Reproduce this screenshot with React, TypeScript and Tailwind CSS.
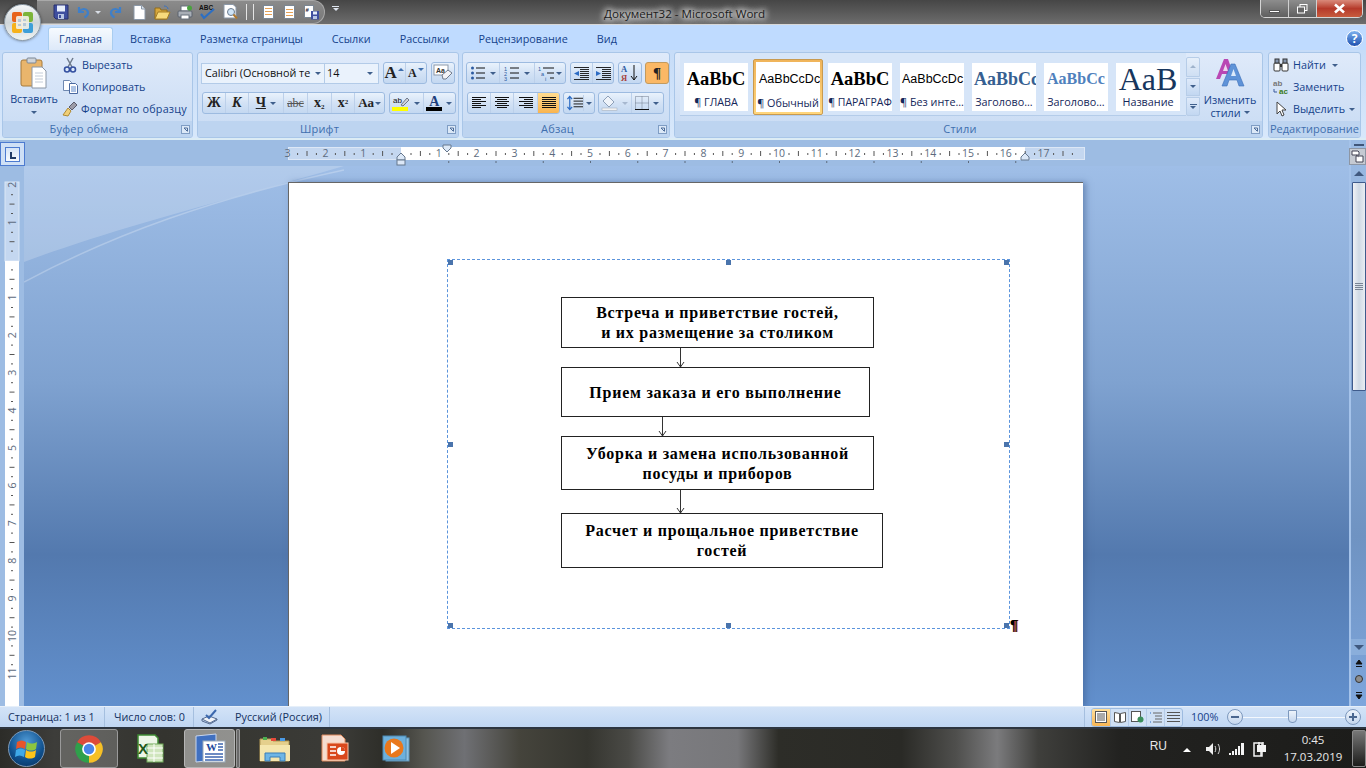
import React from 'react';

const Drop = ({ className = '' }: { className?: string }) => (
  <span className={`inline-block w-0 h-0 shrink-0 border-x-[3px] border-x-transparent border-t-[3px] border-t-[#3f5f8c] ${className}`} />
);

const Launcher = () => (
  <svg width="9" height="9" viewBox="0 0 9 9" className="mr-[2px]">
    <rect x="0.5" y="0.5" width="8" height="8" fill="#dbe8f7" stroke="#7f9dc4" />
    <path d="M3 3h3.5v3.5M3 3l3 3" stroke="#4c6c99" fill="none" />
  </svg>
);

const Group = ({ title, w, launcher = true, children }: { title: string; w: string; launcher?: boolean; children: React.ReactNode }) => (
  <div className={`${w} h-[86px] shrink-0 flex flex-col rounded-[3px] border border-[#a9c6e8] bg-gradient-to-b from-[#dfeafa] to-[#c8dbf3] overflow-hidden`}>
    <div className="h-[68px] relative">{children}</div>
    <div className="h-[16px] bg-[#bdd4f0] flex items-center justify-center relative text-[#3f6fae] text-[11px]">
      <span className={`flex-1 text-center ${launcher ? 'pr-[6px] tracking-[0.2px]' : ''}`}>{title}</span>
      {launcher && <Launcher />}
    </div>
  </div>
);

const Cluster = ({ className = '', children }: { className?: string; children: React.ReactNode }) => (
  <div className={`h-[22px] flex items-stretch rounded-[3px] border border-[#9dbbe0] bg-gradient-to-b from-[#e9f2fc] via-[#d3e2f5] to-[#c4d8f1] divide-x divide-[#bcd0ea] overflow-hidden ${className}`}>
    {children}
  </div>
);

const Cell = ({ w, active = false, children }: { w: string; active?: boolean; children: React.ReactNode }) => (
  <div className={`${w} flex items-center justify-center gap-[4px] ${active ? 'bg-gradient-to-b from-[#ffdc8f] to-[#f9b44f]' : ''}`}>{children}</div>
);

const LineIcon = ({ rows }: { rows: [number, number][] }) => (
  <svg width="16" height="14" viewBox="0 0 16 14">
    {rows.map(([x, w], i) => (
      <rect key={i} x={x} y={1 + i * 2} width={w} height="1" fill="#111" />
    ))}
  </svg>
);

const StyleTile = ({ sample, sampleClass, label, labelClass = '' }: { sample: string; sampleClass: string; label: string; labelClass?: string }) => (
  <div className="w-[64px] h-[48px] bg-white flex flex-col overflow-hidden shrink-0">
    <div className={`h-[32px] flex items-center justify-center whitespace-nowrap overflow-hidden ${sampleClass}`}>{sample}</div>
    <div className={`h-[16px] leading-[14px] text-center whitespace-nowrap text-[#15275a] ${labelClass}`}>{label}</div>
  </div>
);

const OfficeButton = () => (
  <div className="absolute left-[4px] top-[4px] w-[37px] h-[37px] rounded-full bg-gradient-to-b from-[#f5f7f8] via-[#cfd6da] to-[#eef3f3] border border-[#8c9aa6] flex items-center justify-center shadow-[0_0_3px_#00000080]">
    <svg width="25" height="25" viewBox="0 0 25 25">
      <rect x="2" y="2" width="10" height="10" rx="2" fill="#e8641c" />
      <rect x="13" y="2" width="10" height="10" rx="2" fill="#7cb53a" />
      <rect x="2" y="13" width="10" height="10" rx="2" fill="#f6b21b" />
      <rect x="13" y="13" width="10" height="10" rx="2" fill="#3d9fd8" />
      <rect x="6" y="6" width="13" height="13" rx="1.5" fill="#f3f1e8" opacity="0.9" />
      <path d="M8 9h3v3H8zM13 9h3v2h-3zM8 14h3v2H8zM13 13h3v3h-3z" fill="#b6c9d8" />
    </svg>
  </div>
);

const QatIcons = () => (
  <>
    <svg width="16" height="16" viewBox="0 0 16 16" className="ml-[16px] shrink-0">
      <path d="M1 1h14v14H3l-2-2z" fill="#3f4f9f" stroke="#28306f" />
      <rect x="4" y="1.5" width="8" height="6" fill="#e7eefb" />
      <rect x="5" y="10" width="6" height="5" fill="#b8c6e4" />
      <rect x="6" y="11" width="2" height="3" fill="#3f4f9f" />
    </svg>
    <svg width="14" height="14" viewBox="0 0 14 14" className="ml-[7px] shrink-0">
      <path d="M3 2v5h5M3.5 6.500C5 3.500 10 3 11.500 6s-.5 5-3 6.500" fill="none" stroke="#3f7fc8" strokeWidth="2.200" />
    </svg>
    <Drop className="ml-[5px] !border-t-[#d8dde5]" />
    <svg width="14" height="14" viewBox="0 0 14 14" className="ml-[8px] shrink-0">
      <path d="M11 2v5H6M10.500 6.500C9 3.500 4 3 2.500 6s.5 5 3 6.500" fill="none" stroke="#3f7fc8" strokeWidth="2.200" />
    </svg>
    <svg width="13" height="15" viewBox="0 0 13 15" className="ml-[10px] shrink-0">
      <path d="M1 .5h7.500L12 4v10.500H1z" fill="#fff" stroke="#8b98a8" />
      <path d="M8.500.5V4H12" fill="#dfe6ee" stroke="#8b98a8" />
    </svg>
    <svg width="17" height="15" viewBox="0 0 17 15" className="ml-[8px] shrink-0">
      <path d="M1 3h5l1 2h6v9H1z" fill="#d8a83c" stroke="#8f6a1c" />
      <path d="M1 14l3-7h12l-3 7z" fill="#f8da7c" stroke="#a57d24" />
      <path d="M10 1c2 0 4 1 4 3" fill="none" stroke="#3b72c0" />
    </svg>
    <svg width="16" height="15" viewBox="0 0 16 15" className="ml-[6px] shrink-0">
      <rect x="4" y="1" width="8" height="5" fill="#fff" stroke="#66707c" />
      <rect x="1" y="6" width="14" height="6" rx="1" fill="#a8aeb6" stroke="#5a626e" />
      <rect x="4" y="10" width="8" height="4" fill="#fff" stroke="#66707c" />
      <circle cx="12.500" cy="3" r="2.500" fill="#4aa23e" />
    </svg>
    <svg width="17" height="16" viewBox="0 0 17 16" className="ml-[6px] shrink-0">
      <text x="0" y="6" fontSize="6.500" fontWeight="700" fill="#111" fontFamily="Liberation Sans">ABC</text>
      <path d="M2 10l3 4 10-9" fill="none" stroke="#2c6fc4" strokeWidth="2.200" />
    </svg>
    <svg width="15" height="16" viewBox="0 0 15 16" className="ml-[7px] shrink-0">
      <path d="M1 .5h9L13 3v11H1z" fill="#fff" stroke="#8b98a8" />
      <circle cx="8" cy="8" r="3.500" fill="#cfe4f6" stroke="#6a7a8c" />
      <path d="M10.500 10.500l3.500 4" stroke="#b07a30" strokeWidth="2" />
    </svg>
    <div className="ml-[8px] w-[1px] h-[16px] bg-[#e4e4e4]" />
    <div className="ml-[6px] w-[1px] h-[16px] bg-[#e4e4e4]" />
    <svg width="11" height="14" viewBox="0 0 11 14" className="ml-[9px] shrink-0">
      <rect x=".5" y=".5" width="10" height="13" fill="#fff" stroke="#7b8794" />
      <path d="M2 3.500h7M2 6.500h7M2 9.500h7" stroke="#e08a2c" strokeWidth=".8" />
    </svg>
    <svg width="11" height="14" viewBox="0 0 11 14" className="ml-[10px] shrink-0">
      <rect x=".5" y=".5" width="10" height="13" fill="#fff" stroke="#7b8794" />
      <path d="M2 4.500h7M2 7.500h7M2 10.500h7" stroke="#e08a2c" strokeWidth=".8" />
    </svg>
    <svg width="16" height="15" viewBox="0 0 16 15" className="ml-[9px] shrink-0">
      <rect x=".5" y=".5" width="9" height="12" fill="#fff" stroke="#7b8794" />
      <text x="1.500" y="7" fontSize="6" fontWeight="700" fill="#223" fontFamily="Liberation Sans">#</text>
      <path d="M7 6h8v8.500H7z" fill="#3f4f9f" />
      <rect x="9" y="6.500" width="4" height="3" fill="#e7eefb" />
      <rect x="9" y="11" width="4" height="3" fill="#b8c6e4" />
    </svg>
  </>
);

const TitleBar = () => (
  <div className="h-[25px] shrink-0 flex items-start bg-gradient-to-b from-[#464646] to-[#6d6d6d] border-b border-b-[#d8d8d8]">
    <div className="ml-[37px] w-[288px] h-[24px] flex items-center rounded-r-full bg-gradient-to-b from-[#8b8b8b] to-[#777] border border-[#a9a9a9] border-l-0">
      <QatIcons />
    </div>
    <div className="ml-[7px] mt-[6px] flex flex-col items-center gap-[1px]">
      <div className="w-[7px] h-[1px] bg-[#dfe6f0]" />
      <Drop className="!border-t-[#dfe6f0]" />
    </div>
    <div className="ml-[265px] mt-[6px] text-[11.6px] leading-[16px] text-[#1c1c1c] [text-shadow:0_0_6px_#fff,0_0_6px_#fff,0_0_10px_#fff]">Документ32 - Microsoft Word</div>
    <div className="ml-auto mr-[3px] h-[18px] w-[103px] flex rounded-b-[5px] border border-t-0 border-[#d5d5d5] overflow-hidden">
      <div className="w-[28px] flex items-end justify-center pb-[4px] bg-gradient-to-b from-[#8d8d8d] to-[#5f5f5f] border-r border-[#d0d0d0]">
        <div className="w-[11px] h-[3px] bg-white border border-[#555]" />
      </div>
      <div className="w-[28px] flex items-center justify-center bg-gradient-to-b from-[#8d8d8d] to-[#5f5f5f] border-r border-[#d0d0d0]">
        <svg width="11" height="10" viewBox="0 0 11 10"><rect x="3" y=".5" width="7" height="6" fill="none" stroke="#fff" /><rect x=".5" y="3" width="7" height="6" fill="#666" stroke="#fff" /></svg>
      </div>
      <div className="flex-1 flex items-center justify-center bg-gradient-to-b from-[#d9897a] via-[#b5392a] to-[#c75b3d]">
        <svg width="13" height="11" viewBox="0 0 13 11"><path d="M2 1.500l9 8M11 1.500l-9 8" stroke="#fff" strokeWidth="2.600" /></svg>
      </div>
    </div>
  </div>
);

const TabRow = () => (
  <div className="h-[25px] shrink-0 flex items-end pl-[48px] bg-[#bfdbff] text-[#15428b] relative">
    <div className="w-[65px] h-[23px] flex items-center justify-center rounded-t-[3px] border border-b-0 border-[#a9cdf0] bg-gradient-to-b from-[#f6fafe] to-[#dde9f9]">Главная</div>
    <div className="h-[23px] flex items-center gap-[29px] ml-[17px] text-[10.8px]">
      <span>Вставка</span>
      <span>Разметка страницы</span>
      <span>Ссылки</span>
      <span>Рассылки</span>
      <span>Рецензирование</span>
      <span>Вид</span>
    </div>
    <div className="ml-auto mr-[3px] mb-[3px] w-[17px] h-[17px] rounded-full bg-gradient-to-b from-[#7fb2ee] to-[#1d4fb0] border border-white text-white text-[12px] leading-[15px] font-bold text-center">?</div>
  </div>
);

const ClipboardGroup = () => (
  <Group title="Буфер обмена" w="w-[191px]">
    <div className="h-full flex text-[#15428b]">
      <div className="w-[56px] ml-[3px] flex flex-col items-center">
        <svg width="28" height="32" viewBox="0 0 28 32" className="mt-[4px]">
          <rect x="1" y="3" width="21" height="26" rx="2" fill="#e9b56c" stroke="#a67a3c" />
          <rect x="7" y="1" width="9" height="5" rx="1" fill="#cfd4da" stroke="#7d8794" />
          <path d="M12 10h10l4 4v17H12z" fill="#fff" stroke="#8a96a6" />
          <path d="M15 16h8M15 19h8M15 22h8M15 25h8" stroke="#c3ccd8" />
        </svg>
        <span className="mt-[3px] leading-[14px]">Вставить</span>
        <Drop className="mt-[5px]" />
      </div>
      <div className="ml-[1px] pt-[1px] flex flex-col">
        <div className="h-[22px] flex items-center gap-[5px]">
          <svg width="14" height="16" viewBox="0 0 14 16"><path d="M4 1l5 9M10 1L5 10" stroke="#6f7b8c" strokeWidth="1.500" /><circle cx="4" cy="12.500" r="2.500" fill="none" stroke="#3450a0" strokeWidth="1.600" /><circle cx="10" cy="12.500" r="2.500" fill="none" stroke="#3450a0" strokeWidth="1.600" /></svg>
          <span>Вырезать</span>
        </div>
        <div className="h-[22px] flex items-center gap-[4px]">
          <svg width="15" height="14" viewBox="0 0 15 14"><path d="M.5.5h6l2 2v8h-8z" fill="#fff" stroke="#6f88b0" /><path d="M6.500 3.500h6l2 2v8h-8z" fill="#fff" stroke="#4a69a0" /><path d="M8 7h5M8 9h5M8 11h5" stroke="#5a86c8" /></svg>
          <span>Копировать</span>
        </div>
        <div className="h-[22px] flex items-center gap-[3px] -ml-[1px]">
          <svg width="16" height="16" viewBox="0 0 16 16"><path d="M1 14l5-7 3 3-3 5z" fill="#f0cf78" stroke="#b08a34" /><path d="M7 6l5-5 3 3-5 5z" fill="#9c9ca8" stroke="#5c5c6c" /></svg>
          <span className="tracking-[0.2px]">Формат по образцу</span>
        </div>
      </div>
    </div>
  </Group>
);

const FontGroup = () => (
  <Group title="Шрифт" w="w-[262px]">
    <div className="pl-[3px] pt-[9px] flex flex-col gap-[8px] text-[#15428b]">
      <div className="flex items-center">
        <div className="w-[124px] h-[21px] flex items-center justify-between px-[3px] bg-[#eaf2fc] border border-[#b3cbe8] text-[#111] overflow-hidden whitespace-nowrap">
          <span className="w-[106px] overflow-hidden">Calibri (Основной те</span>
          <Drop />
        </div>
        <div className="w-[54px] h-[21px] flex items-center justify-between px-[2px] pr-[5px] bg-[#eaf2fc] border border-[#b3cbe8] border-l-0 text-[#111]">
          <span>14</span>
          <Drop />
        </div>
        <Cluster className="ml-[4px] w-[44px]">
          <Cell w="w-[22px] !gap-[1px]"><span className="font-['Liberation_Serif'] font-bold text-[17px] text-[#222]">A</span><Drop className="rotate-180 -mt-[8px] !border-t-[#3f6fae]" /></Cell>
          <Cell w="w-[21px] !gap-[1px]"><span className="font-['Liberation_Serif'] font-bold text-[12px] text-[#222]">A</span><Drop className="-mt-[8px] !border-t-[#3f6fae]" /></Cell>
        </Cluster>
        <Cluster className="ml-[4px] w-[24px] justify-center">
          <svg width="20" height="18" viewBox="0 0 20 18" className="self-center">
            <rect x="1" y="1" width="14" height="10" fill="#fff" stroke="#8d99aa" />
            <text x="3" y="9" fontSize="7" fontWeight="700" fill="#333" fontFamily="Liberation Sans">Aa</text>
            <path d="M9 11l6-5 4 3-6 6h-3z" fill="#f3f3f6" stroke="#6f7a8c" />
          </svg>
        </Cluster>
      </div>
      <div className="flex items-center">
        <Cluster className="ml-[1px] w-[183px] font-['Liberation_Serif'] text-[#222]">
          <Cell w="w-[23px]"><span className="font-bold text-[14px]">Ж</span></Cell>
          <Cell w="w-[23px]"><span className="font-bold italic text-[14px]">К</span></Cell>
          <Cell w="w-[36px]"><span className="font-bold underline text-[14px]">Ч</span><Drop /></Cell>
          <Cell w="w-[24px]"><span className="line-through text-[12px] text-[#555]">abc</span></Cell>
          <Cell w="w-[24px]"><span className="font-bold text-[14px]">x<sub className="text-[7px]">2</sub></span></Cell>
          <Cell w="w-[24px]"><span className="font-bold text-[14px]">x<sup className="text-[7px]">2</sup></span></Cell>
          <Cell w="w-[29px] !gap-[1px]"><span className="font-bold text-[13px]">Aa</span><Drop /></Cell>
        </Cluster>
        <Cluster className="ml-[4px] w-[67px]">
          <Cell w="w-[34px]">
            <svg width="18" height="17" viewBox="0 0 18 17">
              <text x="1" y="8" fontSize="8" fill="#111" fontFamily="Liberation Sans">ab</text>
              <path d="M9 10l6-7 2 2-6 6z" fill="#d0d4dc" stroke="#70788a" />
              <rect x="0" y="12" width="16" height="4" fill="#ffff00" />
            </svg>
            <Drop />
          </Cell>
          <Cell w="w-[32px]">
            <div className="flex flex-col items-center leading-[11px]">
              <span className="font-['Liberation_Serif'] font-bold text-[14px] text-[#1e3f7c]">A</span>
              <div className="w-[16px] h-[4px] bg-black" />
            </div>
            <Drop />
          </Cell>
        </Cluster>
      </div>
    </div>
  </Group>
);

const ParagraphGroup = () => (
  <Group title="Абзац" w="w-[208px]">
    <div className="pl-[3px] pt-[9px] flex flex-col gap-[8px]">
      <div className="flex items-center">
        <Cluster className="w-[100px]">
          <Cell w="w-[33px]">
            <svg width="16" height="14" viewBox="0 0 16 14"><path d="M6 2h9M6 7h9M6 12h9" stroke="#111" /><circle cx="2.500" cy="2" r="1.500" fill="#2c5aa0" /><circle cx="2.500" cy="7" r="1.500" fill="#2c5aa0" /><circle cx="2.500" cy="12" r="1.500" fill="#2c5aa0" /></svg>
            <Drop />
          </Cell>
          <Cell w="w-[35px]">
            <svg width="16" height="15" viewBox="0 0 16 15"><path d="M6 2h9M6 7h9M6 12h9" stroke="#111" /><text x="0" y="5" fontSize="5.500" fill="#2c5aa0" fontFamily="Liberation Sans">1</text><text x="0" y="10" fontSize="5.500" fill="#2c5aa0" fontFamily="Liberation Sans">2</text><text x="0" y="15" fontSize="5.500" fill="#2c5aa0" fontFamily="Liberation Sans">3</text></svg>
            <Drop />
          </Cell>
          <Cell w="w-[30px]">
            <svg width="17" height="15" viewBox="0 0 17 15"><path d="M5 2h11M9 7h7M12 12h4" stroke="#111" /><text x="0" y="5" fontSize="5.500" fill="#2c5aa0" fontFamily="Liberation Sans">1</text><text x="3" y="10" fontSize="5.500" fill="#2c5aa0" fontFamily="Liberation Sans">a</text><text x="7" y="15" fontSize="5.500" fill="#2c5aa0" fontFamily="Liberation Sans">i</text></svg>
            <Drop className="-ml-[3px]" />
          </Cell>
        </Cluster>
        <Cluster className="ml-[4px] w-[44px]">
          <Cell w="w-[22px]">
            <svg width="16" height="13" viewBox="0 0 16 13"><path d="M7 2.500h9M7 4.500h9M7 6.500h9M7 8.500h9M7 10.500h9M1 12.500h15M1 .5h15" stroke="#111" strokeWidth=".9" /><path d="M6 4L1 6.500 6 9z" fill="#2c6cc4" /></svg>
          </Cell>
          <Cell w="w-[21px]">
            <svg width="16" height="13" viewBox="0 0 16 13"><path d="M7 2.500h9M7 4.500h9M7 6.500h9M7 8.500h9M7 10.500h9M1 12.500h15M1 .5h15" stroke="#111" strokeWidth=".9" /><path d="M1 4l5 2.500L1 9z" fill="#2c6cc4" /></svg>
          </Cell>
        </Cluster>
        <Cluster className="ml-[4px] w-[24px] justify-center">
          <svg width="20" height="18" viewBox="0 0 20 18" className="self-center">
            <text x="1" y="8" fontSize="8.500" fontWeight="700" fill="#2c5aa0" fontFamily="Liberation Serif">A</text>
            <text x="1" y="17" fontSize="8.500" fontWeight="700" fill="#a8443c" fontFamily="Liberation Serif">Я</text>
            <path d="M14 1v15M11 12l3 4 3-4" fill="none" stroke="#111" />
          </svg>
        </Cluster>
        <Cluster className="ml-[3px] w-[24px] justify-center !bg-none !bg-[#fbb865] border-[#c29a5e]">
          <span className="self-center font-['Liberation_Serif'] font-bold text-[15px] text-[#222]">¶</span>
        </Cluster>
      </div>
      <div className="flex items-center">
        <Cluster className="ml-[1px] w-[93px]">
          <Cell w="w-[23px]"><LineIcon rows={[[1, 14], [1, 9], [1, 14], [1, 9], [1, 14], [1, 9]]} /></Cell>
          <Cell w="w-[24px]"><LineIcon rows={[[1, 14], [3, 10], [1, 14], [3, 10], [1, 14], [3, 10]]} /></Cell>
          <Cell w="w-[24px]"><LineIcon rows={[[1, 14], [6, 9], [1, 14], [6, 9], [1, 14], [6, 9]]} /></Cell>
          <Cell w="w-[21px]" active><LineIcon rows={[[1, 14], [1, 14], [1, 14], [1, 14], [1, 14], [1, 14]]} /></Cell>
        </Cluster>
        <Cluster className="ml-[3px] w-[32px] items-center justify-center gap-[2px]">
          <svg width="18" height="16" viewBox="0 0 18 16" className="self-center">
            <path d="M4 1v14M1.500 4L4 1l2.500 3M1.500 12L4 15l2.500-3" fill="none" stroke="#2c6cc4" strokeWidth="1.300" />
            <path d="M8 3h10M8 6h10M8 9h10M8 12h10" stroke="#111" />
          </svg>
          <Drop className="self-center" />
        </Cluster>
        <Cluster className="ml-[3px] w-[66px]">
          <Cell w="w-[33px]">
            <svg width="17" height="16" viewBox="0 0 17 16"><path d="M7 1l6 6-5 5-6-6z" fill="#eef3fa" stroke="#8ea0b8" /><rect x="1" y="13" width="15" height="2.500" fill="#f2f2f2" stroke="#9aa6b6" strokeWidth=".5" /></svg>
            <Drop className="!border-t-[#a7b8cf]" />
          </Cell>
          <Cell w="w-[32px]">
            <svg width="14" height="14" viewBox="0 0 14 14"><path d="M.5.500h13v13H.500zM7 .5v13M.5 7h13" fill="none" stroke="#6f7b8c" strokeDasharray="1 1" /><path d="M0 13.500h14" stroke="#111" /></svg>
            <Drop />
          </Cell>
        </Cluster>
      </div>
    </div>
  </Group>
);

const StylesGroup = () => (
  <Group title="Стили" w="w-[589px]">
    <div className="h-full flex">
      <div className="ml-[5px] w-[506px] h-[63px] pt-[5px] flex items-center pl-[4px] bg-[#d6e5f8] border-b border-[#b4cce9] box-border">
        <StyleTile sample="AaBbC" sampleClass="font-['Liberation_Serif'] font-bold text-[18.5px] text-black" label="¶ ГЛАВА" />
        <div className="ml-[5px] w-[70px] h-[56px] p-[2px] rounded-[2px] bg-gradient-to-b from-[#f0b45a] to-[#ffd67c] border border-[#c89a50] shrink-0">
          <div className="h-full bg-white flex flex-col overflow-hidden">
            <div className="h-[34px] pl-[3px] flex items-center whitespace-nowrap overflow-hidden text-[12.5px] text-black font-['Liberation_Sans']">AaBbCcDc</div>
            <div className="text-center leading-[14px] whitespace-nowrap text-[#15275a]">¶ Обычный</div>
          </div>
        </div>
        <div className="ml-[5px]"><StyleTile sample="AaBbC" sampleClass="font-['Liberation_Serif'] font-bold text-[18.5px] text-black" label="¶ ПАРАГРАФ" labelClass="text-[10.5px]" /></div>
        <div className="ml-[8px]"><StyleTile sample="AaBbCcDc" sampleClass="!justify-start pl-[2px] text-[12.5px] text-black font-['Liberation_Sans']" label="¶ Без инте..." /></div>
        <div className="ml-[8px]"><StyleTile sample="AaBbCc" sampleClass="!justify-start pl-[2px] font-['Liberation_Serif'] font-bold text-[18px] text-[#365f91]" label="Заголово..." /></div>
        <div className="ml-[8px]"><StyleTile sample="AaBbCc" sampleClass="!justify-start pl-[3px] font-['Liberation_Serif'] font-bold text-[16px] text-[#4f81bd]" label="Заголово..." /></div>
        <div className="ml-[8px]"><StyleTile sample="AaB" sampleClass="font-['Liberation_Serif'] text-[32px] leading-[30px] text-[#17365d]" label="Название" /></div>
      </div>
      <div className="w-[14px] mt-[4px] h-[59px] flex flex-col gap-[1px]">
        <div className="h-[20px] rounded-t-[2px] flex items-center justify-center bg-gradient-to-b from-[#e6effa] to-[#cfdff3] border border-[#b7cde8]"><Drop className="rotate-180 !border-t-[#9fb3cc]" /></div>
        <div className="h-[19px] flex items-center justify-center bg-gradient-to-b from-[#dfeafa] to-[#c2d7f1] border border-[#b7cde8]"><Drop /></div>
        <div className="h-[19px] rounded-b-[2px] flex flex-col items-center justify-center gap-[1px] bg-gradient-to-b from-[#dfeafa] to-[#c2d7f1] border border-[#b7cde8]"><div className="w-[7px] h-[1px] bg-[#3f5f8c]" /><Drop /></div>
      </div>
      <div className="w-[60px] flex flex-col items-center text-[#15428b] leading-[13px]">
        <svg width="32" height="30" viewBox="0 0 32 30" className="mt-[4px]">
          <path d="M2 22L10 2h4l7 20h-4l-2-5H8l-2 5z" fill="#b948b4" />
          <path d="M9 14h5l-2.500-7z" fill="#efd6ee" />
          <path d="M8 29L17 7h4l9 22h-5l-2-6h-8l-2 6z" fill="#5f93d8" stroke="#3c6fb8" strokeWidth=".6" />
          <path d="M17 19h5l-2.500-7z" fill="#dceafa" />
        </svg>
        <span className="mt-[6px]">Изменить</span>
        <span className="flex items-center gap-[3px]">стили<Drop /></span>
      </div>
    </div>
  </Group>
);

const EditingGroup = () => (
  <Group title="Редактирование" w="w-[93px]" launcher={false}>
    <div className="pl-[4px] pt-[1px] flex flex-col text-[#15428b]">
      <div className="h-[22px] flex items-center gap-[4px]">
        <svg width="16" height="14" viewBox="0 0 16 14"><rect x="1" y="5" width="6" height="8" rx="1" fill="#fff" stroke="#333" /><rect x="9" y="5" width="6" height="8" rx="1" fill="#fff" stroke="#333" /><rect x="2" y="1" width="4" height="4" fill="#8494ac" stroke="#333" /><rect x="10" y="1" width="4" height="4" fill="#8494ac" stroke="#333" /><rect x="7" y="6" width="2" height="3" fill="#333" /></svg>
        <span>Найти</span><Drop className="ml-[2px]" />
      </div>
      <div className="h-[22px] flex items-center gap-[3px]">
        <svg width="17" height="16" viewBox="0 0 17 16"><text x="0" y="7" fontSize="8" fontWeight="700" fill="#777" fontFamily="Liberation Sans">ab</text><text x="6" y="15" fontSize="8" fontWeight="700" fill="#3a7a1c" fontFamily="Liberation Sans">ac</text><path d="M1 10v3h3" fill="none" stroke="#3a5a9c" /></svg>
        <span>Заменить</span>
      </div>
      <div className="h-[22px] flex items-center gap-[4px]">
        <svg width="16" height="17" viewBox="0 0 16 17"><path d="M4 1v12l3-3 2 5 2-1-2-5h4z" fill="#fff" stroke="#444" /></svg>
        <span>Выделить</span><Drop />
      </div>
    </div>
  </Group>
);

const Ribbon = () => (
  <div className="h-[90px] shrink-0 pt-[2px] pl-[2px] flex bg-gradient-to-b from-[#c6dcf8] to-[#d8e8fb] border-b-2 border-b-[#dcecf5]">
    <ClipboardGroup />
    <div className="ml-[4px]"><FontGroup /></div>
    <div className="ml-[3px]"><ParagraphGroup /></div>
    <div className="ml-[4px]"><StylesGroup /></div>
    <div className="ml-[5px]"><EditingGroup /></div>
  </div>
);

const cmLabels = [-3, -2, -1, 1, 2, 3, 4, 5, 6, 7, 8, 9, 10, 11, 12, 13, 14, 15, 16, 17];
const hTicks = Array.from({ length: 21 }, (_, i) => i - 3);
const tabStops = Array.from({ length: 13 }, (_, i) => i + 1);

const HorizontalRuler = () => (
  <svg width="797" height="26" viewBox="0 0 797 26" className="ml-[263px] shrink-0 overflow-visible">
    <rect x=".5" y="7.500" width="796" height="12" fill="#c4d7f0" stroke="#dce7f6" />
    <rect x="113" y="7" width="624" height="13" fill="#fff" />
    {hTicks.flatMap(n => {
      const x = 113 + n * 37.8;
      return [
        <rect key={`a${n}`} x={x + 9.5} y="13" width="1" height="2" fill="#555" />,
        <rect key={`b${n}`} x={x + 18.9} y="11" width="1" height="5" fill="#555" />,
        <rect key={`c${n}`} x={x + 28.3} y="13" width="1" height="2" fill="#555" />,
      ];
    })}
    {cmLabels.map(n => (
      <text key={n} x={113 + n * 37.8} y="17" textAnchor="middle" fontSize="10.500" fill="#5d6b7e" fontFamily="Open Sans">{Math.abs(n)}</text>
    ))}
    {tabStops.map(n => (
      <rect key={n} x={113 + n * 47.25} y="21" width="1" height="2" fill="#5d6b7e" />
    ))}
    <path d="M113 13l4 4v3h-8v-3z" fill="#dce8f7" stroke="#67788e" />
    <rect x="109" y="20" width="8" height="5" fill="#dce8f7" stroke="#67788e" />
    <path d="M155 5h8v3l-4 4-4-4z" fill="#dce8f7" stroke="#67788e" />
    <path d="M737 13l4 4v3h-8v-3z" fill="#dce8f7" stroke="#67788e" />
  </svg>
);

const vTicks = Array.from({ length: 14 }, (_, i) => i - 3);
const vLabels = [-2, -1, 1, 2, 3, 4, 5, 6, 7, 8, 9, 10, 11];

const VerticalRuler = () => (
  <svg width="24" height="541" viewBox="0 0 24 541" className="shrink-0">
    <rect x="5" y="16" width="14" height="79" fill="#c4d7f0" stroke="#dce7f6" />
    <rect x="5" y="95" width="14" height="446" fill="#fff" />
    {vTicks.flatMap(n => {
      const y = 94 + n * 37.6;
      return [
        <rect key={`a${n}`} x="11" y={y + 9.4} width="2" height="1" fill={y + 9.4 < 17 ? 'none' : '#555'} />,
        <rect key={`b${n}`} x="9.500" y={y + 18.8} width="5" height="1" fill={y + 18.8 < 17 ? 'none' : '#555'} />,
        <rect key={`c${n}`} x="11" y={y + 28.2} width="2" height="1" fill={y + 28.2 < 17 ? 'none' : '#555'} />,
      ];
    })}
    {vLabels.map(n => {
      const y = 94 + n * 37.6;
      return (
        <text key={n} x="16" y={y} textAnchor="middle" fontSize="10.500" fill="#5d6b7e" fontFamily="Open Sans" transform={`rotate(-90 16 ${y})`}>{Math.abs(n)}</text>
      );
    })}
  </svg>
);

const Arrow = ({ ml, h }: { ml: string; h: number }) => (
  <svg width="9" height={h} viewBox={`0 0 9 ${h}`} className={`${ml} block`}>
    <path d={`M4.500 0V${h}M1 ${h - 5}l3.500 5 3.500-5`} fill="none" stroke="#333" />
  </svg>
);

const FlowBox = ({ w, h, children }: { w: string; h: string; children: React.ReactNode }) => (
  <div className={`${w} ${h} border border-[#222] flex items-center justify-center text-center font-['Liberation_Serif'] font-bold text-[16px] leading-[20px] tracking-[0.75px] text-black bg-white`}>
    <div className="pt-[1px]">{children}</div>
  </div>
);

const Handle = ({ className }: { className: string }) => <div className={`absolute w-[5px] h-[5px] bg-[#4a74ac] ${className}`} />;

const Diagram = () => (
  <div className="relative ml-[158px] mt-[76px] w-[563px] h-[370px] border border-dashed border-[#5b94dc] pl-[113px] pt-[37px]">
    <Handle className="left-0 top-0" />
    <Handle className="left-[278px] top-0" />
    <Handle className="right-0 top-0" />
    <Handle className="left-0 top-[182px]" />
    <Handle className="right-0 top-[182px]" />
    <Handle className="left-0 bottom-0" />
    <Handle className="left-[278px] bottom-0" />
    <Handle className="right-0 bottom-0" />
    <FlowBox w="w-[313px]" h="h-[51px]">Встреча и приветствие гостей,<br />и их размещение за столиком</FlowBox>
    <Arrow ml="ml-[115px]" h={19} />
    <FlowBox w="w-[309px]" h="h-[50px]">Прием заказа и его выполнение</FlowBox>
    <Arrow ml="ml-[97px]" h={19} />
    <FlowBox w="w-[313px]" h="h-[54px]">Уборка и замена использованной<br />посуды и приборов</FlowBox>
    <Arrow ml="ml-[115px]" h={23} />
    <FlowBox w="w-[322px]" h="h-[55px]">Расчет и прощальное приветствие<br />гостей</FlowBox>
    <span className="absolute left-full -bottom-[4px] ml-[1px] font-['Liberation_Sans'] font-bold text-[14px] leading-[14px] text-black [text-shadow:1px_0_0_#c02010]">¶</span>
  </div>
);

const Scrollbar = () => (
  <div className="w-[17px] shrink-0 flex flex-col items-center border-l-2 border-l-[#a5c3ea] bg-gradient-to-b from-[#9bbbe4] via-[#6f93c2] via-70% to-[#7ea6dc] -mt-[26px] relative">
    <div className="mt-[4px] w-[10px] h-[2px] bg-[#3f5578]" />
    <div className="mt-[2px] w-[17px] h-[17px] -ml-[2px] bg-[#c5cad2] border border-[#8d96a4] flex items-center justify-center">
      <svg width="13" height="13" viewBox="0 0 13 13"><path d="M1 1h6l1 1v3H1zM5 6h7v6H5z" fill="#fff" stroke="#445" /><path d="M5 5l3 2" stroke="#445" strokeDasharray="1 1" /></svg>
    </div>
    <Drop className="mt-[6px] !border-x-[5px] !border-t-[5px] rotate-180 !border-t-[#40597f]" />
    <div className="mt-[6px] w-[14px] h-[209px] rounded-[1px] border border-[#3f5b8c] bg-gradient-to-r from-[#f0f2f5] via-[#cfd9e5] to-[#e8edf2] flex flex-col items-center justify-center gap-[1px]">
      <div className="w-[8px] h-[1px] bg-[#7a8595]" />
      <div className="w-[8px] h-[1px] bg-[#7a8595]" />
      <div className="w-[8px] h-[1px] bg-[#7a8595]" />
      <div className="w-[8px] h-[1px] bg-[#7a8595]" />
    </div>
    <div className="mt-auto w-[15px] h-[16px] bg-[#8aaedb] flex items-center justify-center">
      <Drop className="!border-x-[5px] !border-t-[5px] !border-t-[#40597f]" />
    </div>
    <svg width="10" height="46" viewBox="0 0 10 46" className="mt-[1px] mb-[4px]">
      <path d="M5 4L2 8h6zM2 10.500h6" stroke="#111" fill="#111" />
      <circle cx="5" cy="23" r="3.500" fill="#8d8d8d" stroke="#333" />
      <path d="M2 36.500h6M5 43l3-4H2z" stroke="#111" fill="#111" />
    </svg>
  </div>
);

const Workspace = () => (
  <div className="flex-1 min-h-0 flex flex-col bg-[#9dbce3]">
    <div className="h-[26px] shrink-0 flex items-start">
      <div className="mt-[2px] w-[25px] h-[24px] p-[1px] border border-[#4d7bd0] bg-[#cfe0f6] flex items-center justify-center">
        <div className="w-[15px] h-[15px] border border-[#4d7bd0] bg-gradient-to-b from-[#d5e4f7] to-[#f7fafe] flex items-end justify-center pb-[2px]">
          <div className="w-[6px] h-[7px] border-l-2 border-b-2 border-[#1f3a66]" />
        </div>
      </div>
      <HorizontalRuler />
    </div>
    <div className="flex-1 min-h-0 flex">
      <VerticalRuler />
      <div className="flex-1 relative overflow-hidden pl-[264px] pt-[16px] bg-[linear-gradient(180deg,#9fbee7_0%,#7fa2d0_40%,#5379ae_72%,#6290cd_100%)]">
        <svg width="320" height="125" viewBox="0 0 320 125" className="absolute left-0 top-0">
          <path d="M0 0H320C210 32 90 62 0 96z" fill="#ffffff" opacity="0.2" />
          <path d="M0 116C90 68 190 32 320 4" fill="none" stroke="#ffffff" strokeOpacity="0.25" strokeWidth="1.500" />
        </svg>
        <div className="relative w-[795px] h-[525px] bg-white border-t border-l border-[#666] shadow-[3px_0_6px_#3a5a8c80] text-[11px]">
          <Diagram />
        </div>
      </div>
      <Scrollbar />
    </div>
  </div>
);

const StatusBar = () => (
  <div className="h-[21px] shrink-0 flex items-center bg-gradient-to-b from-[#d3e3f7] to-[#bfd6f3] border-t border-t-[#e6eff9] text-[#15315f]">
    <div className="w-[105px] shrink-0 pl-[8px] h-full flex items-center border-r border-[#a5bfdf]">Страница: 1 из 1</div>
    <div className="w-[89px] shrink-0 pl-[9px] h-full flex items-center border-r border-[#a5bfdf]">Число слов: 0</div>
    <div className="w-[136px] shrink-0 pl-[7px] h-full flex items-center border-r border-[#a5bfdf]">
      <svg width="18" height="16" viewBox="0 0 18 16"><path d="M1 10l7-3 8 3-7 4z" fill="#f2f4f8" stroke="#556b90" /><path d="M1 10v2l8 3 7-4v-1" fill="none" stroke="#556b90" /><path d="M5 6l3 3 7-8" fill="none" stroke="#3c68ad" strokeWidth="2" /></svg>
      <span className="ml-[16px] whitespace-nowrap">Русский (Россия)</span>
    </div>
    <div className="ml-[754px] w-[1px] h-full bg-[#a5bfdf] shrink-0" />
    <div className="ml-[6px] w-[92px] h-[19px] shrink-0 flex rounded-[3px] border border-[#9dbbe0] bg-[#cfe0f5] divide-x divide-[#b4cbe8] overflow-hidden">
      <div className="w-[19px] flex items-center justify-center bg-gradient-to-b from-[#ffdf9a] to-[#f8b653]">
        <svg width="12" height="12" viewBox="0 0 12 12"><rect x=".5" y=".5" width="11" height="11" fill="#fff" stroke="#555" /><path d="M2 3h8M2 5h8M2 7h8M2 9h8" stroke="#555" /></svg>
      </div>
      <div className="w-[18px] flex items-center justify-center">
        <svg width="12" height="12" viewBox="0 0 12 12"><path d="M.5 1.500l5 1v9l-5-1zM11.500 1.500l-5 1v9l5-1z" fill="#fff" stroke="#555" /></svg>
      </div>
      <div className="w-[18px] flex items-center justify-center">
        <svg width="13" height="12" viewBox="0 0 13 12"><rect x=".5" y=".5" width="9" height="10" fill="#fff" stroke="#555" /><circle cx="9.500" cy="8.500" r="3" fill="#3a8f5c" /></svg>
      </div>
      <div className="w-[18px] flex items-center justify-center">
        <svg width="12" height="12" viewBox="0 0 12 12"><path d="M3 2h9M5 5h7M5 8h7M3 11h9" stroke="#666" /><path d="M0 2h1M0 11h1" stroke="#2c6cc4" /></svg>
      </div>
      <div className="flex-1 flex items-center justify-center">
        <svg width="13" height="12" viewBox="0 0 13 12"><path d="M0 1.500h13M0 4.500h13M0 7.500h13M0 10.500h13" stroke="#555" /></svg>
      </div>
    </div>
    <span className="ml-[8px] w-[27px] shrink-0 text-[#15428b] whitespace-nowrap">100%</span>
    <div className="ml-[9px] w-[16px] h-[16px] shrink-0 rounded-full border border-[#7d98bd] bg-gradient-to-b from-[#eef4fb] to-[#c4d6ee] flex items-center justify-center">
      <div className="w-[8px] h-[2px] bg-[#4b678f]" />
    </div>
    <div className="w-[102px] h-[1px] shrink-0 bg-[#f4f8fd] relative">
      <div className="absolute left-[45px] -top-[7px] w-[9px] h-[13px] rounded-b-[4px] bg-gradient-to-b from-[#eef4fb] to-[#c4d6ee] border border-[#7d98bd]" />
    </div>
    <div className="w-[16px] h-[16px] shrink-0 rounded-full border border-[#7d98bd] bg-gradient-to-b from-[#eef4fb] to-[#c4d6ee] flex items-center justify-center relative">
      <div className="w-[8px] h-[2px] bg-[#4b678f]" />
      <div className="absolute w-[2px] h-[8px] bg-[#4b678f]" />
    </div>
  </div>
);

const Taskbar = () => (
  <div className="h-[41px] shrink-0 flex items-center border-t-2 border-t-[#2d3540] bg-[linear-gradient(90deg,#2c2c28_0%,#3d3d3a_4%,#34342f_12%,#3b3b37_25%,#2e2e29_28%,#55554f_31%,#6f7074_34%,#45443c_38%,#35352f_43%,#4a4a46_46%,#7c7c80_49%,#77777a_54%,#2d2d28_57%,#2a2a26_66%,#4f4f4d_70%,#7b7b7d_73%,#3f3f3c_76%,#222220_82%,#1c1c1a_100%)]">
    <div className="ml-[8px] w-[37px] h-[37px] rounded-full border border-[#7d9ab8] bg-[radial-gradient(circle_at_50%_30%,#4f9ad6,#0f4f8c_60%,#0a2f5a)] flex items-center justify-center shrink-0">
      <svg width="24" height="22" viewBox="0 0 24 22">
        <path d="M2 4c3-2 6-2 9 0l-1 7c-3-2-6-2-9 0z" fill="#e8552a" />
        <path d="M12 4c3 2 6 2 10 0l-1 7c-3 2-7 2-10 0z" fill="#8cc63f" />
        <path d="M1 12c3-2 6-2 9 0l-1 7c-3-2-6-2-9 0z" fill="#3fa9e8" />
        <path d="M11 12c3 2 7 2 10 0l-1 7c-3 2-7 2-10 0z" fill="#fcc419" />
      </svg>
    </div>
    <div className="ml-[15px] w-[58px] h-[39px] flex items-center justify-center rounded-[3px] border border-[#9a9a9a] bg-white/20 shrink-0">
      <svg width="30" height="30" viewBox="0 0 24 24">
        <path d="M12 12L2.470 6.500A11 11 0 0 1 21.530 6.500z" fill="#dd4b39" />
        <path d="M12 12L21.530 6.500A11 11 0 0 1 12 23z" fill="#f6c026" />
        <path d="M12 12V23A11 11 0 0 1 2.470 6.500z" fill="#2fa04b" />
        <circle cx="12" cy="12" r="5.500" fill="#fff" />
        <circle cx="12" cy="12" r="4.200" fill="#4a86e8" />
      </svg>
    </div>
    <svg width="30" height="30" viewBox="0 0 30 30" className="ml-[16px] shrink-0">
      <path d="M4 1h17l3 3v20H4z" fill="#eef6e8" stroke="#3f8a34" strokeWidth="1.500" />
      <rect x="13" y="10" width="16" height="18" fill="#cfe5bd" stroke="#6fa858" />
      <path d="M13 14h16M13 19h16M13 24h16M20 10v18" stroke="#fff" />
      <text x="4" y="20" fontSize="15" fontWeight="700" fill="#24591c" fontFamily="Liberation Sans">X</text>
    </svg>
    <div className="ml-[20px] w-[51px] h-[39px] flex items-center justify-center rounded-[3px] border border-[#b5b5b5] bg-white/45 shrink-0">
      <svg width="32" height="32" viewBox="0 0 32 32">
        <path d="M2 3l20-2v26l-20 2z" fill="#4070c0" stroke="#c8d6ee" />
        <rect x="9" y="8" width="22" height="21" fill="#fff" stroke="#9ab" />
        <text x="12" y="18" fontSize="11" fontWeight="700" fill="#1f4a9c" fontFamily="Liberation Serif">W</text>
        <path d="M11 21h18M11 24h18M11 27h18M24 11h5M24 14h5M24 17h5" stroke="#3c66b0" strokeWidth="1.300" />
      </svg>
    </div>
    <div className="ml-[1px] w-[4px] h-[39px] bg-[#6a6a6a] border border-[#999] rounded-[1px] shrink-0" />
    <svg width="32" height="28" viewBox="0 0 32 28" className="ml-[19px] shrink-0">
      <path d="M1 4h11l2 2h16v20H1z" fill="#e5cf8c" stroke="#b49a54" />
      <rect x="4" y="2" width="4" height="3" fill="#4caf50" /><rect x="12" y="3" width="5" height="3" fill="#e64a3a" /><rect x="21" y="3" width="5" height="3" fill="#4a9ae6" />
      <path d="M1 10h30v16H1z" fill="#f5e6ae" />
      <path d="M6 26v-8h20v8h-5v-4H11v4z" fill="#6fb6e6" stroke="#3a7eb8" />
    </svg>
    <svg width="30" height="30" viewBox="0 0 30 30" className="ml-[28px] shrink-0">
      <path d="M3 1h19l4 4v22H3z" fill="#f6ddd0" stroke="#e08a5c" />
      <rect x="8" y="9" width="21" height="17" fill="#d9481c" stroke="#f8c4a8" />
      <path d="M11 13h6M11 17h6M11 21h6" stroke="#fff" strokeWidth="1.500" />
      <circle cx="22" cy="17" r="4" fill="#fff" /><path d="M22 17V13a4 4 0 0 1 4 4z" fill="#d9481c" />
    </svg>
    <svg width="28" height="28" viewBox="0 0 28 28" className="ml-[33px] shrink-0">
      <rect x="4" y="3" width="23" height="23" fill="#8fc0e0" stroke="#5d94b8" />
      <rect x="1" y="1" width="23" height="24" fill="#6db0dc" stroke="#4d8ab4" />
      <circle cx="12" cy="13" r="9.500" fill="#e9781c" />
      <path d="M9 7l9 6-9 6z" fill="#fff" />
    </svg>
    <div className="ml-auto flex items-center text-[#e8e8e8] text-[12px]">
      <span className="font-['Liberation_Sans'] mr-[16px] -mt-[5px]">RU</span>
      <Drop className="rotate-180 !border-x-[4px] !border-t-[4px] !border-t-white mr-[14px] mt-[2px]" />
      <svg width="16" height="14" viewBox="0 0 16 14" className="mr-[8px]"><path d="M1 5h3l4-4v12l-4-4H1z" fill="#f0f0f0" /><path d="M10 4c1 2 1 4 0 6M13 2c2 3 2 7 0 10" fill="none" stroke="#ddd" /></svg>
      <svg width="15" height="12" viewBox="0 0 15 12" className="mr-[9px]"><path d="M0 10h2v2H0zM3 8h2v4H3zM6 6h2v6H6zM9 3h2v9H9zM12 0h3v12h-3z" fill="#f4f4f4" /></svg>
      <svg width="14" height="16" viewBox="0 0 14 16" className="mr-[13px]"><rect x="1" y="2" width="8" height="13" fill="none" stroke="#f4f4f4" strokeWidth="1.500" /><rect x="4" y="4" width="9" height="7" fill="#f4f4f4" /><path d="M6 1v3M10 1v3M8 11v4" stroke="#f4f4f4" strokeWidth="1.500" /></svg>
      <div className="w-[66px] -mt-[2px] flex flex-col items-center leading-[17px] font-['Open_Sans'] text-[11.5px]">
        <span>0:45</span>
        <span>17.03.2019</span>
      </div>
      <div className="ml-[6px] w-[14px] h-[37px] rounded-[2px] border border-[#8a8a8a] bg-gradient-to-b from-[#777] to-transparent" />
    </div>
  </div>
);

export default function App() {
  return (
    <div className="relative w-[1366px] h-[768px] overflow-hidden flex flex-col font-['Open_Sans',sans-serif] text-[10.8px] leading-[14px]">
      <TitleBar />
      <TabRow />
      <Ribbon />
      <Workspace />
      <StatusBar />
      <Taskbar />
      <OfficeButton />
    </div>
  );
}
